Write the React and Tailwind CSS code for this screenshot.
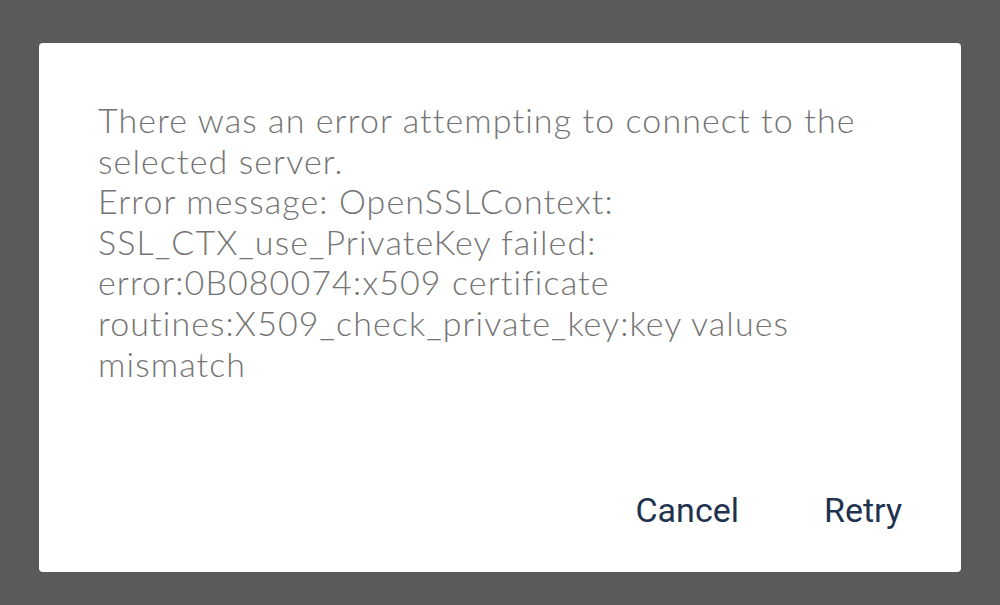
export default function App() {
  const lines = [
    "There was an error attempting to connect to the",
    "selected server.",
    "Error message: OpenSSLContext:",
    "SSL_CTX_use_PrivateKey failed:",
    "error:0B080074:x509 certificate",
    "routines:X509_check_private_key:key values",
    "mismatch",
  ];
  return (
    <div className="w-[1000px] h-[605px] bg-[#5a5a5a] pt-[43px] pl-[39px]">
      <div className="w-[922px] h-[529px] bg-white rounded-[4px] flex flex-col">
        <div className="pl-[59px] pt-[57px] text-[#747474] text-[34px] leading-[40.6px] tracking-[1.1px] font-light whitespace-nowrap" style={{ fontFamily: "Lato, 'Open Sans', sans-serif" }}>
          {lines.map((l, i) => (
            <div key={i}>{l}</div>
          ))}
        </div>
        <div className="mt-auto pb-[42px] pr-[59px] flex justify-end gap-[85px] text-[#1f3350] text-[34px] leading-[40px]" style={{ fontFamily: "Roboto, sans-serif" }}>
          <span>Cancel</span>
          <span>Retry</span>
        </div>
      </div>
    </div>
  );
}
